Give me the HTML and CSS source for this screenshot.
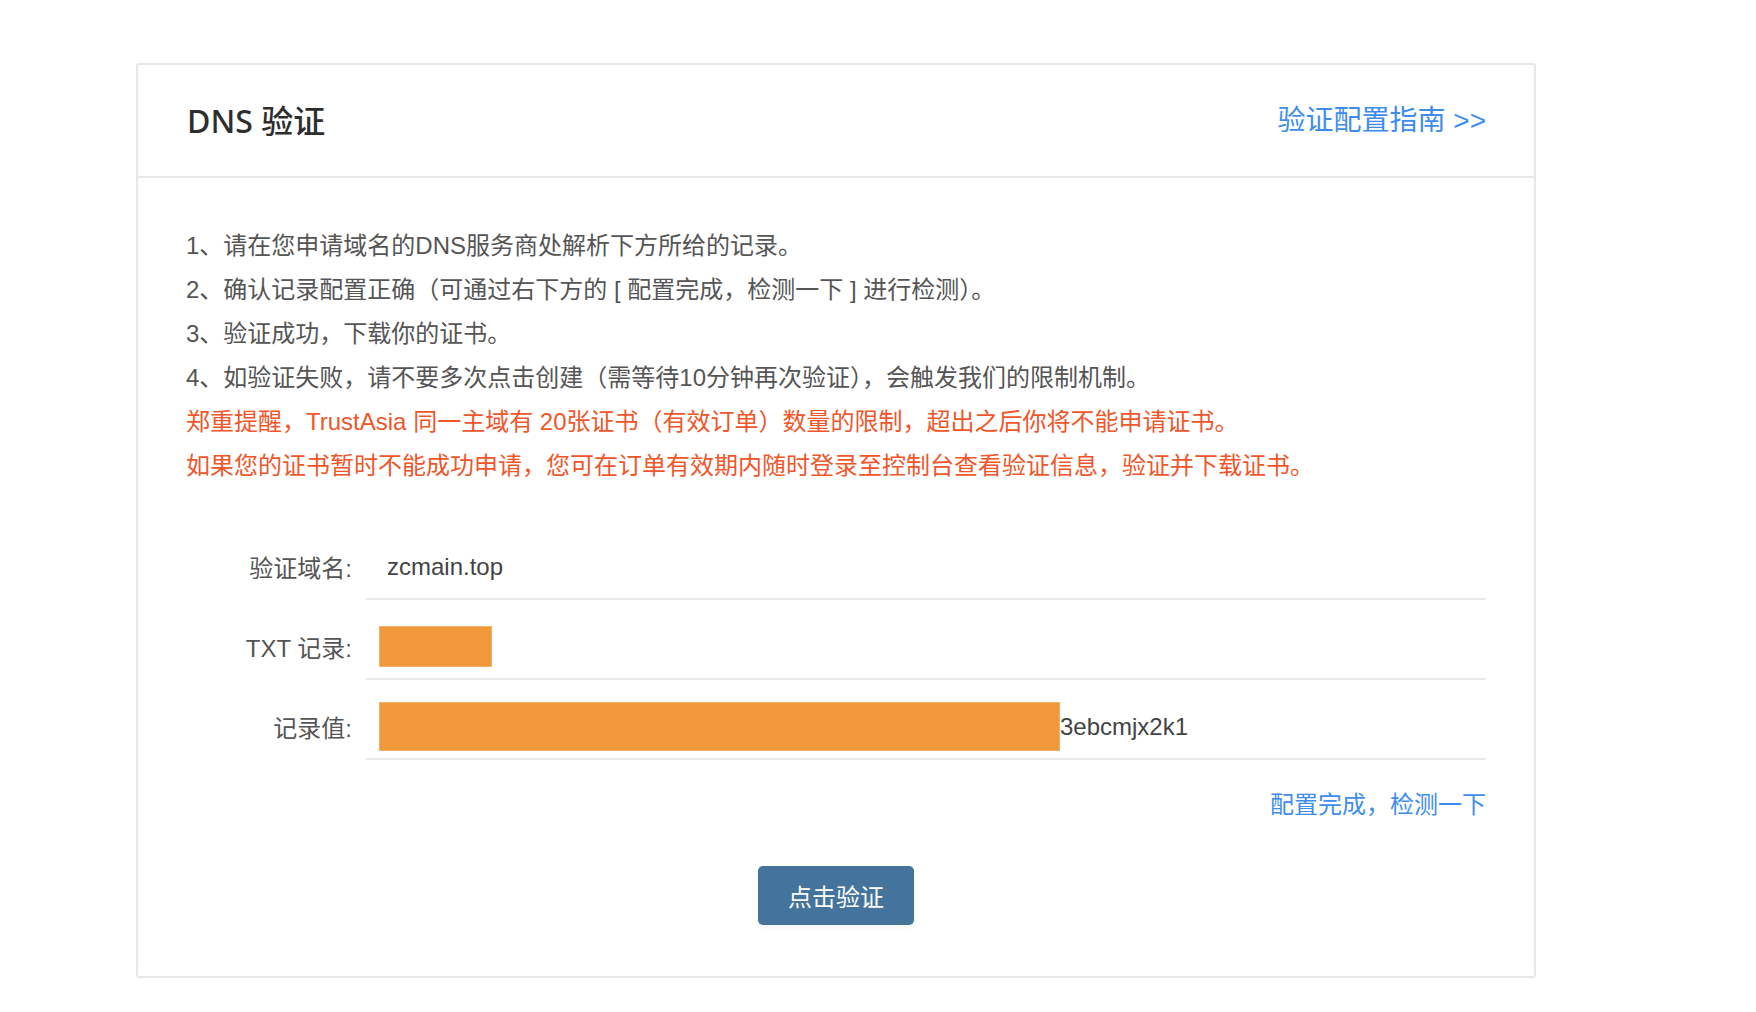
FILE: index.html
```html
<!DOCTYPE html>
<html lang="zh-CN">
<head>
<meta charset="utf-8">
<title>DNS 验证</title>
<link rel="stylesheet" href="styles.css">
</head>
<body>
<div class="card">
  <div class="card-header">
    <h2 class="title">DNS 验证</h2>
    <a class="guide-link" href="#">验证配置指南 &gt;&gt;</a>
  </div>
  <div class="card-body">
    <div class="notes">
      <p>1、请在您申请域名的DNS服务商处解析下方所给的记录。</p>
      <p>2、确认记录配置正确（可通过右下方的 [ 配置完成，检测一下 ] 进行检测）。</p>
      <p>3、验证成功，下载你的证书。</p>
      <p>4、如验证失败，请不要多次点击创建（需等待10分钟再次验证），会触发我们的限制机制。</p>
      <p class="warn">郑重提醒，TrustAsia 同一主域有 20张证书（有效订单）数量的限制，超出之后你将不能申请证书。</p>
      <p class="warn">如果您的证书暂时不能成功申请，您可在订单有效期内随时登录至控制台查看验证信息，验证并下载证书。</p>
    </div>
    <div class="form">
      <div class="row">
        <div class="label">验证域名:</div>
        <div class="value"><span class="text pad">zcmain.top</span></div>
      </div>
      <div class="row">
        <div class="label">TXT 记录:</div>
        <div class="value"><span class="mask mask-small"></span></div>
      </div>
      <div class="row">
        <div class="label">记录值:</div>
        <div class="value"><span class="mask mask-large"></span><span class="text">3ebcmjx2k1</span></div>
      </div>
    </div>
    <div class="check-line"><a class="check-link" href="#">配置完成，检测一下</a></div>
    <div class="actions"><button class="btn" type="button">点击验证</button></div>
  </div>
</div>
</body>
</html>
```
FILE: styles.css
```css
* { box-sizing: border-box; }
html, body { margin: 0; padding: 0; background: #fff; }
body {
  font-family: "Liberation Sans", "Noto Sans CJK SC", sans-serif;
  color: #555;
}
.card {
  width: 1400px;
  margin: 63px 0 0 136px;
  border: 2px solid #e7e7e7;
  border-radius: 3px;
  background: #fff;
}
.card-header {
  height: 113px;
  border-bottom: 2px solid #e7e7e7;
  padding: 0 48px 0 49px;
  display: flex;
  align-items: center;
  justify-content: space-between;
}
.title {
  margin: 0;
  font-family: "Noto Sans", "Noto Sans CJK SC", sans-serif;
  font-size: 32px;
  font-weight: 500;
  color: #2e2e2e;
  line-height: 40px;
}
.guide-link {
  font-size: 28px;
  color: #3e8ded;
  text-decoration: none;
  line-height: 40px;
}
.card-body {
  padding: 46px 48px 51px 48px;
}
.notes p {
  margin: 0;
  font-size: 24px;
  line-height: 44px;
  color: #555;
  white-space: nowrap;
}
.notes p.warn { color: #f0562a; }
.form { margin-top: 32px; }
.row {
  display: flex;
  height: 80px;
}
.label {
  width: 166px;
  margin-right: 14px;
  padding-top: 16px;
  padding-bottom: 4px;
  display: flex;
  align-items: center;
  justify-content: flex-end;
  font-size: 24px;
  color: #555;
}
.value {
  flex: 1;
  padding: 15px 0 0 13px;
  border-bottom: 2px solid #e9e9e9;
  display: flex;
  align-items: center;
}
.text {
  font-size: 24px;
  color: #444;
  line-height: 30px;
}
.text.pad { padding-left: 8px; }
.mask {
  display: block;
  background: #f1983a;
  border: 1px solid #f6b168;
}
.mask-small { width: 113px; height: 41px; }
.mask-large { width: 681px; height: 49px; }
.check-line {
  margin-top: 23px;
  text-align: right;
  line-height: 44px;
}
.check-link {
  font-size: 24px;
  color: #3e8ded;
  text-decoration: none;
}
.actions {
  margin-top: 36px;
  display: flex;
  justify-content: center;
}
.btn {
  width: 156px;
  height: 59px;
  border: none;
  border-radius: 5px;
  background: #44749c;
  color: #fff;
  font-family: "Liberation Sans", "Noto Sans CJK SC", sans-serif;
  font-size: 24px;
  cursor: pointer;
  box-shadow: 0 3px 4px rgba(0, 0, 0, 0.04);
}
```
